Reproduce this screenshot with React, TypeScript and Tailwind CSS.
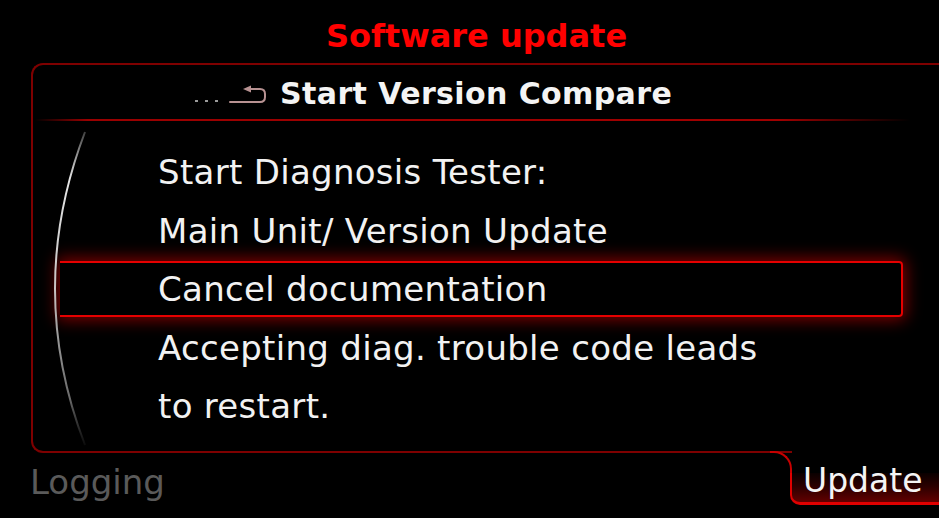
import React from "react";

const rows = [
  "Start Diagnosis Tester:",
  "Main Unit/ Version Update",
  "Cancel documentation",
  "Accepting diag. trouble code leads",
  "to restart.",
];

const selectedIndex = 2;

function BackArrow() {
  return (
    <svg width="40" height="20" viewBox="0 0 40 20" fill="none">
      <path
        d="M1 17 H31 Q36 17 36 12 V9 Q36 4 31 4 H20"
        stroke="#b89292"
        strokeWidth="2"
        strokeLinecap="round"
      />
      <polygon points="14,4 22,0.5 22,7.5" fill="#b89292" />
    </svg>
  );
}

function Arc() {
  return (
    <svg
      className="pointer-events-none absolute left-0 top-0 overflow-visible"
      width="80"
      height="340"
      viewBox="0 0 80 340"
      fill="none"
    >
      <defs>
        <linearGradient id="arcFade" x1="0" y1="0" x2="0" y2="1">
          <stop offset="0%" stopColor="#ffffff" stopOpacity="0.25" />
          <stop offset="15%" stopColor="#f2f2f2" stopOpacity="0.95" />
          <stop offset="50%" stopColor="#d8d8d8" stopOpacity="0.9" />
          <stop offset="85%" stopColor="#9a9a9a" stopOpacity="0.7" />
          <stop offset="100%" stopColor="#777777" stopOpacity="0.1" />
        </linearGradient>
      </defs>
      <path d="M52 11 Q-8 168 52 324" stroke="url(#arcFade)" strokeWidth="2" />
    </svg>
  );
}

export default function App() {
  return (
    <div
      className="flex h-[518px] w-[939px] flex-col overflow-hidden bg-black"
      style={{ fontFamily: "'DejaVu Sans', 'Liberation Sans', sans-serif" }}
    >
      {/* Title */}
      <div className="flex h-[63px] items-center justify-center pl-[14px] pt-[8px] text-[32px] font-bold leading-none text-[#ff0000]">
        Software update
      </div>

      {/* Panel */}
      <div className="ml-[31px] flex h-[390px] w-[940px] shrink-0 flex-col rounded-l-[12px] border-2 border-r-0 border-[#7e0000]">
        {/* Header */}
        <div className="flex h-[54px] items-center pl-[162px] pt-[4px]">
          <div className="mt-[14px] flex w-[26px] items-end gap-[7px]">
            <span className="h-[2px] w-[3px] bg-[#9a9a9a]" />
            <span className="h-[2px] w-[3px] bg-[#9a9a9a]" />
            <span className="h-[2px] w-[3px] bg-[#9a9a9a]" />
          </div>
          <div className="ml-[8px] mt-[2px]">
            <BackArrow />
          </div>
          <span className="ml-[11px] text-[30px] font-bold leading-none tracking-[0.4px] text-[#f4f4f4]">
            Start Version Compare
          </span>
        </div>

        <div className="ml-[2px] h-[2px] w-[875px] bg-[linear-gradient(to_right,transparent,#9a0000_6%,#a00000_85%,transparent)]" />

        {/* List */}
        <div className="relative flex-1 pt-[22px]">
          {rows.map((text, i) => (
            <div key={text} className="flex h-[58.5px] items-center">
              <div
                className={
                  i === selectedIndex
                    ? "ml-[27px] flex h-[56px] w-[843px] items-center rounded-r-[4px] border-2 border-l-0 border-[#e60000] pl-[98px] shadow-[0_0_16px_3px_rgba(225,0,0,0.55)]"
                    : "ml-[27px] flex h-[56px] w-[843px] items-center pl-[98px]"
                }
              >
                <span className="text-[34px] leading-none tracking-[0.3px] text-[#f2f2f2]">
                  {text}
                </span>
              </div>
            </div>
          ))}
          <Arc />
        </div>
      </div>

      {/* Footer */}
      <div className="-mt-[2px] flex h-[67px] shrink-0">
        <div className="flex w-[770px] items-start pl-[30px] pt-[14px]">
          <span className="text-[34px] leading-none text-[#5a5a5a]">Logging</span>
        </div>
        <div className="flex w-[169px] flex-col">
          <div className="flex h-[22px]">
            <div className="h-[22px] w-[22px] rounded-tr-[18px] border-r-2 border-t-2 border-[#c80000] bg-black" />
            <div className="flex-1 bg-black" />
          </div>
          <div className="ml-[20px] flex h-[32px] w-[160px] items-start rounded-bl-[10px] border-b-[3px] border-l-2 border-[#e00000] bg-[linear-gradient(to_bottom,#0a0000_0%,#2a0000_45%,#620000_100%)] pl-[11px]">
            <span className="-mt-[9px] text-[33px] leading-none text-[#f4f4f4]">Update</span>
          </div>
        </div>
      </div>
    </div>
  );
}
